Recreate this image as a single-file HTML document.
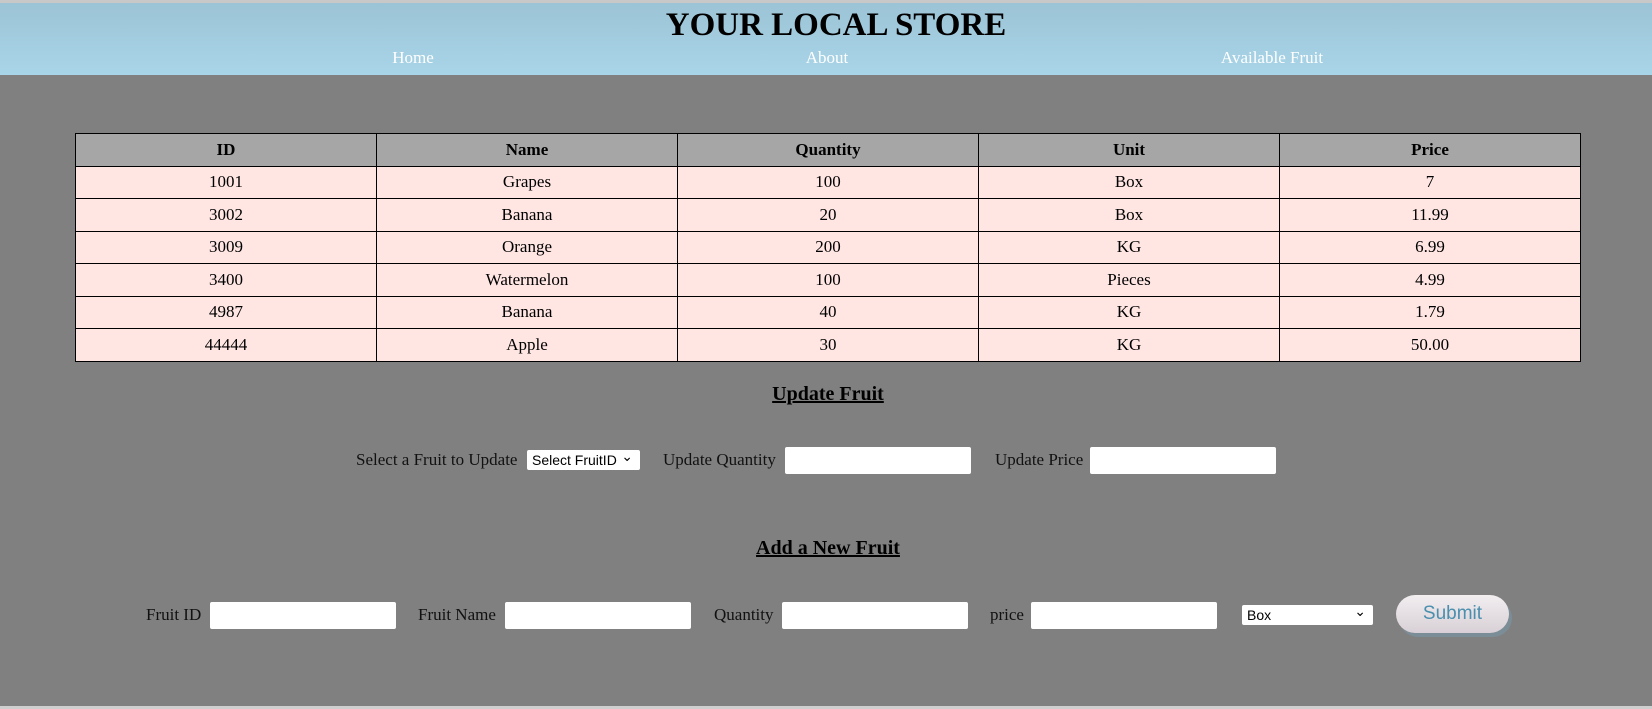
<!DOCTYPE html>
<html><head><style>
body{margin:0;width:1652px;height:709px;background:#808080;font-family:"Liberation Serif",serif;position:relative;overflow:hidden}
.top{position:absolute;left:0;top:0;width:1652px;height:3px;background:#c8c8c8}
.hdr{position:absolute;left:0;top:3px;width:1652px;height:72px;background:linear-gradient(#9cc3d6,#a9d5e8)}
.a{position:absolute;white-space:nowrap}
h1{position:absolute;margin:0;left:10px;width:1652px;text-align:center;top:4px;font-size:33px;font-weight:bold;color:#000}
.nav{color:#fff;font-size:17px;top:45px;transform:translateX(-50%)}
table{position:absolute;left:75px;top:133px;width:1506px;border-collapse:collapse;font-size:17px}
td,th{border:1.5px solid #000;text-align:center;height:31.5px;padding:0;width:20%}
th{background:#a6a6a6}
td{background:#ffe6e3}
.h2{font-size:20px;font-weight:bold;text-decoration:underline;left:2px;width:1652px;text-align:center}
.l{font-size:17px;color:#111}
.in{position:absolute;background:#fff;border-radius:2px;height:27px;width:186px}
.sel{position:absolute;background:#fff;border-radius:2px;font-family:"Liberation Sans",sans-serif;font-size:14px;line-height:20px;padding-left:5px;box-sizing:border-box;height:20px}
.sel:after{content:"⌄";position:absolute;right:7px;top:-4px;font-size:14px}
.btn{position:absolute;left:1396px;top:595px;width:113px;height:38px;border-radius:19px;background:linear-gradient(#f2eef0,#d8d0d6);box-shadow:3px 4px 0 #7b8d96;font-family:"Liberation Sans",sans-serif;font-size:19px;color:#4a8fae;text-align:center;line-height:37px}
.bot{position:absolute;left:0;top:706px;width:1652px;height:3px;background:#cfcfcf}
</style></head><body>
<div class="top"></div>
<div class="hdr"><h1>YOUR LOCAL STORE</h1>
<div class="a nav" style="left:413px">Home</div>
<div class="a nav" style="left:827px">About</div>
<div class="a nav" style="left:1272px">Available Fruit</div>
</div>
<table>
<tr><th>ID</th><th>Name</th><th>Quantity</th><th>Unit</th><th>Price</th></tr>
<tr><td>1001</td><td>Grapes</td><td>100</td><td>Box</td><td>7</td></tr>
<tr><td>3002</td><td>Banana</td><td>20</td><td>Box</td><td>11.99</td></tr>
<tr><td>3009</td><td>Orange</td><td>200</td><td>KG</td><td>6.99</td></tr>
<tr><td>3400</td><td>Watermelon</td><td>100</td><td>Pieces</td><td>4.99</td></tr>
<tr><td>4987</td><td>Banana</td><td>40</td><td>KG</td><td>1.79</td></tr>
<tr><td>44444</td><td>Apple</td><td>30</td><td>KG</td><td>50.00</td></tr>
</table>
<div class="a h2" style="top:383px">Update Fruit</div>
<div class="a l" style="left:356px;top:450px">Select a Fruit to Update</div>
<div class="sel" style="left:527px;top:450px;width:113px">Select FruitID</div>
<div class="a l" style="left:663px;top:450px">Update Quantity</div>
<div class="in" style="left:785px;top:447px"></div>
<div class="a l" style="left:995px;top:450px">Update Price</div>
<div class="in" style="left:1090px;top:447px"></div>
<div class="a h2" style="top:537px">Add a New Fruit</div>
<div class="a l" style="left:146px;top:605px">Fruit ID</div>
<div class="in" style="left:210px;top:602px"></div>
<div class="a l" style="left:418px;top:605px">Fruit Name</div>
<div class="in" style="left:505px;top:602px"></div>
<div class="a l" style="left:714px;top:605px">Quantity</div>
<div class="in" style="left:782px;top:602px"></div>
<div class="a l" style="left:990px;top:605px">price</div>
<div class="in" style="left:1031px;top:602px"></div>
<div class="sel" style="left:1242px;top:605px;width:131px">Box</div>
<div class="btn">Submit</div>
<div class="bot"></div>
</body></html>
